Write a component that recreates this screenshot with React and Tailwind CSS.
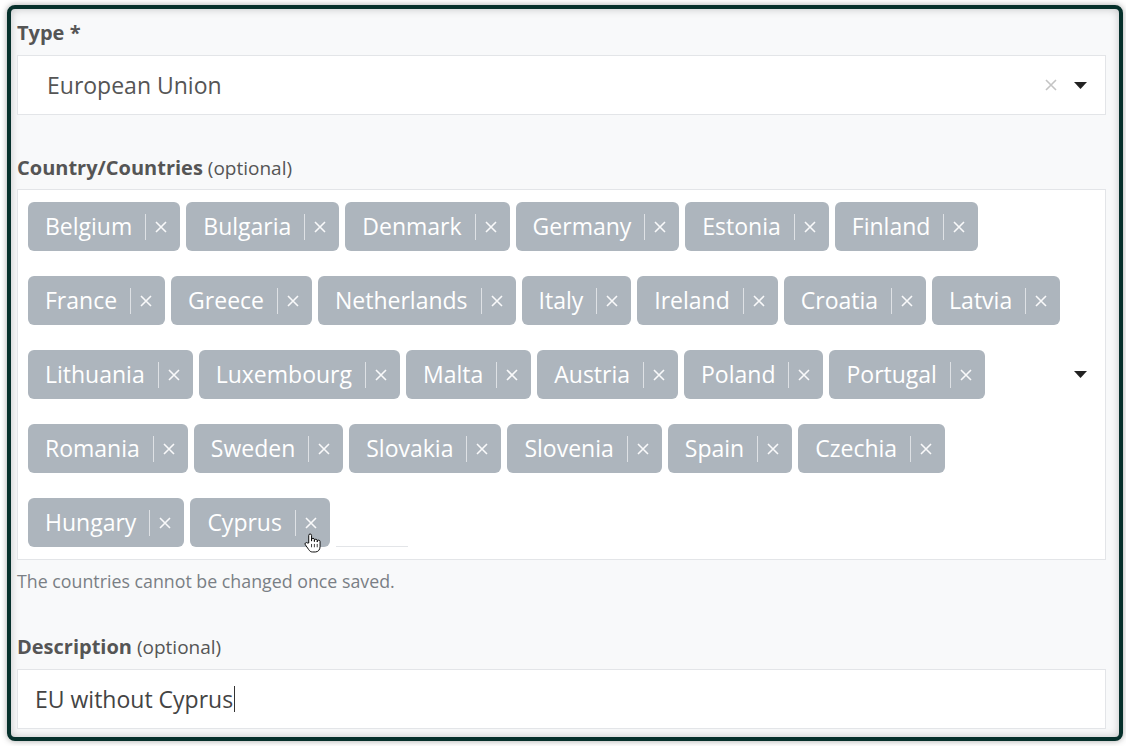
import React from "react";

const rows = [
  ["Belgium", "Bulgaria", "Denmark", "Germany", "Estonia", "Finland"],
  ["France", "Greece", "Netherlands", "Italy", "Ireland", "Croatia", "Latvia"],
  ["Lithuania", "Luxembourg", "Malta", "Austria", "Poland", "Portugal"],
  ["Romania", "Sweden", "Slovakia", "Slovenia", "Spain", "Czechia"],
  ["Hungary", "Cyprus"],
];

function Caret() {
  return (
    <svg width="13" height="7" viewBox="0 0 13 7" className="shrink-0">
      <path d="M0 0 H13 L6.5 7 Z" fill="#222" />
    </svg>
  );
}

function Cross({ color, size = 12 }) {
  return (
    <svg width={size} height={size} viewBox="0 0 12 12" className="shrink-0">
      <path d="M1 1 L11 11 M11 1 L1 11" stroke={color} strokeWidth="1.6" />
    </svg>
  );
}

function HandCursor() {
  return (
    <svg
      width="17"
      height="22"
      viewBox="0 0 18 22"
      className="absolute left-[-1px] top-[15px] pointer-events-none"
    >
      <path
        d="M5 11 V3 a1.5 1.5 0 0 1 3 0 V9 V7.5 a1.5 1.5 0 0 1 3 0 V9.5 V8.5 a1.5 1.5 0 0 1 3 0 V10 V9.5 a1.5 1.5 0 0 1 3 0 V15 c0 3 -2 5.5 -5 5.5 H9 c-2 0 -3 -1 -4 -2.5 L1.5 13 a1.4 1.4 0 0 1 2 -2 Z"
        fill="#fff"
        stroke="#000"
        strokeWidth="1"
        strokeLinejoin="round"
      />
      <path d="M8 12 V15.5 M11 12 V15.5 M14 12 V15.5" stroke="#000" strokeWidth="0.8" />
    </svg>
  );
}

function Chip({ name, hover }) {
  return (
    <div className="flex items-center h-[49px] rounded-[6px] bg-[#adb5bd] pl-[17px] pr-[13px] text-white text-[23px]">
      <span>{name}</span>
      <span className="ml-[13px] h-[26px] w-px bg-white/60" />
      <span className="relative ml-[9px]">
        <Cross color="rgba(255,255,255,0.92)" />
        {hover && <HandCursor />}
      </span>
    </div>
  );
}

export default function App() {
  return (
    <div
      className="w-[1126px] h-[746px] bg-white pt-[5px] pl-[7px] text-[#555]"
      style={{ fontFamily: '"Open Sans", "Noto Sans", sans-serif' }}
    >
      <div className="w-[1116px] h-[736px] rounded-[8px] border-4 border-[#06302b] bg-[#f8f9fa] pt-[12px] pl-[6px] pr-[13px] shadow-[0_0_6px_rgba(0,0,0,0.35),inset_0_0_8px_rgba(0,0,0,0.22)]">
        {/* Type */}
        <div className="text-[20px] leading-[24px] font-bold">
          Type <span>*</span>
        </div>
        <div className="mt-[10px] flex items-center h-[60px] bg-white border border-[#e3e5e8] pl-[29px] pr-[18px]">
          <span className="flex-1 text-[23px] text-[#555]">European Union</span>
          <span className="mr-[17px]">
            <Cross color="#c4c4c4" />
          </span>
          <Caret />
        </div>

        {/* Countries */}
        <div className="mt-[41px] text-[19px] leading-[24px]">
          <span className="font-bold text-[20px]">Country/Countries</span>{" "}
          <span>(optional)</span>
        </div>
        <div className="mt-[9px] flex items-center h-[371px] bg-white border border-[#e3e5e8] pl-[10px] pr-[18px]">
          <div className="flex-1 flex flex-col gap-[25px]">
            {rows.map((row, i) => (
              <div key={i} className="flex items-end gap-[6px]">
                {row.map((c) => (
                  <Chip key={c} name={c} hover={c === "Cyprus"} />
                ))}
                {i === rows.length - 1 && (
                  <div className="w-[72px] border-b border-[#e3e5e8]" />
                )}
              </div>
            ))}
          </div>
          <Caret />
        </div>
        <div className="mt-[10px] text-[17.8px] leading-[22px] text-[#7a7f85]">
          The countries cannot be changed once saved.
        </div>

        {/* Description */}
        <div className="mt-[43px] text-[19px] leading-[24px]">
          <span className="font-bold text-[20px]">Description</span>{" "}
          <span>(optional)</span>
        </div>
        <div className="mt-[10px] flex items-center h-[60px] bg-white border border-[#e3e5e8] pl-[17px]">
          <span className="text-[23px] text-[#444]">EU without Cyprus</span>
          <span className="ml-[1px] h-[26px] w-px bg-[#333]" />
        </div>
      </div>
    </div>
  );
}
